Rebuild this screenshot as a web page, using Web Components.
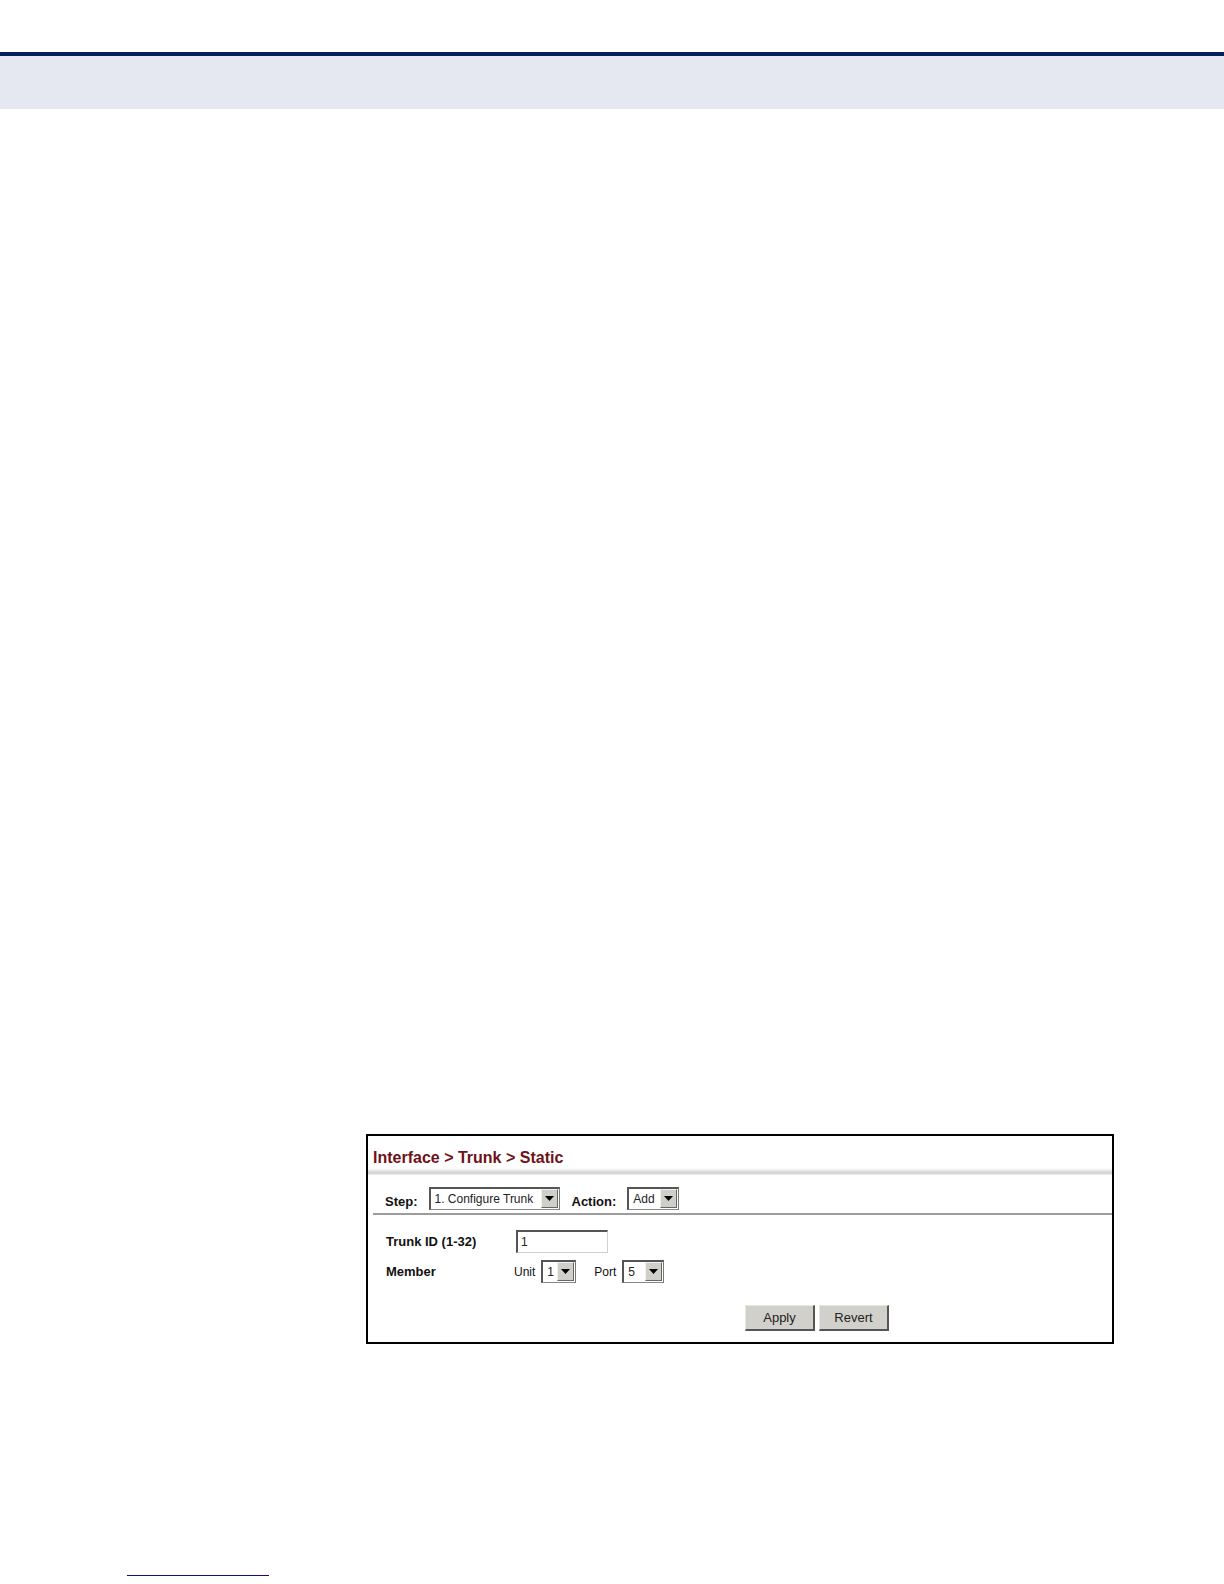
<!DOCTYPE html>
<html lang="en">
<head>
<meta charset="utf-8">
<title>Interface &gt; Trunk &gt; Static</title>
<style>
  body {
    margin: 0;
    background: #fff;
    color: #111;
    font-family: "Liberation Sans", Arial, sans-serif;
    font-size: 13px;
    line-height: 16px;
  }
</style>
</head>
<body>
<manual-page>
  <trunk-panel heading="Interface &gt; Trunk &gt; Static">
    <select-field slot="toolbar" strong label="Step:" options="1. Configure Trunk" style="--select-width: 131px"></select-field>
    <select-field slot="toolbar" strong label="Action:" options="Add" style="--select-width: 52px"></select-field>
    <text-field label="Trunk ID (1-32)" value="1"></text-field>
    <form-row label="Member">
      <select-field label="Unit" options="1" style="--select-width: 35px"></select-field>
      <select-field label="Port" options="5" style="--select-width: 42px"></select-field>
    </form-row>
    <push-button slot="actions">Apply</push-button>
    <push-button slot="actions">Revert</push-button>
  </trunk-panel>
</manual-page>

<script>
class ManualPage extends HTMLElement {
  constructor() {
    super();
    this.attachShadow({ mode: "open" }).innerHTML = `
      <style>
        :host {
          display: flex;
          flex-direction: column;
          box-sizing: border-box;
          min-height: 100vh;
          padding: 52px 0 8px;
        }

        header {
          height: 53px;
          border-top: 4px solid #061f5c;
          background: #e5e8f0;
        }

        main {
          flex: 1;
          padding: 1025px 110px 0 366px;
        }

        footer {
          width: 142px;
          margin-left: 127px;
          border-bottom: 1px solid #10107c;
        }
      </style>
      <header></header>
      <main><slot></slot></main>
      <footer></footer>
    `;
  }
}

class TrunkPanel extends HTMLElement {
  constructor() {
    super();
    this.attachShadow({ mode: "open" }).innerHTML = `
      <style>
        :host {
          display: block;
          border: 2px solid #000;
        }

        h1 {
          margin: 0;
          padding: 12px 5px 0;
          color: #701018;
          font-size: 16px;
          line-height: 20px;
        }

        /* soft shadow under the heading */
        .shade {
          height: 7px;
          background: linear-gradient(#fff, #d4d4d4 65%, #dcdcdc 85%, #f4f4f4);
        }

        .toolbar {
          display: flex;
          gap: 12px;
          margin-left: 5px;
          padding: 12px 12px 3px;
          border-bottom: 2px solid #9c9c9c;
        }

        .fields {
          display: grid;
          gap: 7px;
          padding: 15px 18px 22px;
        }

        .actions {
          display: flex;
          justify-content: flex-end;
          gap: 4px;
          max-width: 521px;
          padding-bottom: 11px;
        }
      </style>
      <h1></h1>
      <div class="shade"></div>
      <div class="toolbar"><slot name="toolbar"></slot></div>
      <div class="fields"><slot></slot></div>
      <div class="actions"><slot name="actions"></slot></div>
    `;
  }

  connectedCallback() {
    this.shadowRoot.querySelector("h1").textContent = this.getAttribute("heading");
  }
}

class FormRow extends HTMLElement {
  constructor() {
    super();
    this.attachShadow({ mode: "open" }).innerHTML = `
      <style>
        :host {
          display: grid;
          grid-template-columns: 128px 1fr;
          align-items: center;
        }

        .name {
          font-weight: 700;
        }

        .controls {
          display: flex;
          gap: 18px;
        }
      </style>
      <span class="name"></span>
      <div class="controls"><slot></slot></div>
    `;
  }

  connectedCallback() {
    this.shadowRoot.querySelector(".name").textContent = this.getAttribute("label");
  }
}

class TextField extends HTMLElement {
  constructor() {
    super();
    this.attachShadow({ mode: "open" }).innerHTML = `
      <style>
        :host {
          display: grid;
          grid-template-columns: 130px 92px;
          align-items: center;
        }

        label {
          font-weight: 700;
        }

        input {
          box-sizing: border-box;
          width: 100%;
          height: 23px;
          margin: 0;
          padding: 0 3px;
          border: 1px solid #d0d0d0;
          border-top: 2px solid #555;
          border-left: 2px solid #555;
          border-radius: 0;
          background: #fff;
          color: #222;
          font: inherit;
          font-size: 12px;
        }
      </style>
      <label for="field"></label>
      <input id="field" type="text">
    `;
  }

  connectedCallback() {
    this.shadowRoot.querySelector("label").textContent = this.getAttribute("label");
    this.shadowRoot.querySelector("input").value = this.getAttribute("value") ?? "";
  }
}

class SelectField extends HTMLElement {
  constructor() {
    super();
    this.attachShadow({ mode: "open" }).innerHTML = `
      <style>
        :host {
          display: flex;
          align-items: center;
          gap: 6px;
          font-size: 12px;
        }

        :host([strong]) {
          align-items: flex-end;
          gap: 11px;
        }

        :host([strong]) label {
          font-size: 13px;
          font-weight: 700;
        }

        .box {
          display: grid;
          width: var(--select-width);
        }

        select,
        .arrow {
          grid-area: 1 / 1;
        }

        select {
          appearance: none;
          box-sizing: border-box;
          width: 100%;
          height: 23px;
          margin: 0;
          padding: 0 17px 0 4px;
          border: 2px solid #555;
          border-right: 1px solid #777;
          border-bottom: 1px solid #888;
          border-radius: 0;
          background: #fff;
          color: #222;
          font: inherit;
          font-size: 12px;
        }

        .arrow {
          justify-self: end;
          align-self: center;
          box-sizing: border-box;
          width: 17px;
          height: 19px;
          margin-right: 2px;
          border: 1px solid #f0f0ec;
          border-right-color: #666;
          border-bottom-color: #666;
          background: #d0cec8;
          pointer-events: none;
        }

        svg {
          display: block;
          width: 100%;
          height: 100%;
        }
      </style>
      <label for="choice"></label>
      <div class="box">
        <select id="choice"></select>
        <span class="arrow">
          <svg viewBox="0 0 15 17" aria-hidden="true"><path d="M3 6h9L7.500 11z" fill="#000"/></svg>
        </span>
      </div>
    `;
  }

  connectedCallback() {
    this.shadowRoot.querySelector("label").textContent = this.getAttribute("label");
    const options = this.getAttribute("options").split("|");
    this.shadowRoot.querySelector("select").replaceChildren(
      ...options.map((text) => new Option(text)),
    );
  }
}

class PushButton extends HTMLElement {
  constructor() {
    super();
    this.attachShadow({ mode: "open" }).innerHTML = `
      <style>
        :host {
          display: block;
        }

        button {
          display: block;
          box-sizing: border-box;
          width: 70px;
          height: 26px;
          padding: 0;
          border: 1px solid #e8e6e0;
          border-right: 2px solid #555;
          border-bottom: 2px solid #555;
          border-radius: 0;
          background: #d2d0ca;
          color: #222;
          font: inherit;
        }
      </style>
      <button type="button"><slot></slot></button>
    `;
  }
}

customElements.define("manual-page", ManualPage);
customElements.define("trunk-panel", TrunkPanel);
customElements.define("form-row", FormRow);
customElements.define("text-field", TextField);
customElements.define("select-field", SelectField);
customElements.define("push-button", PushButton);
</script>
</body>
</html>
